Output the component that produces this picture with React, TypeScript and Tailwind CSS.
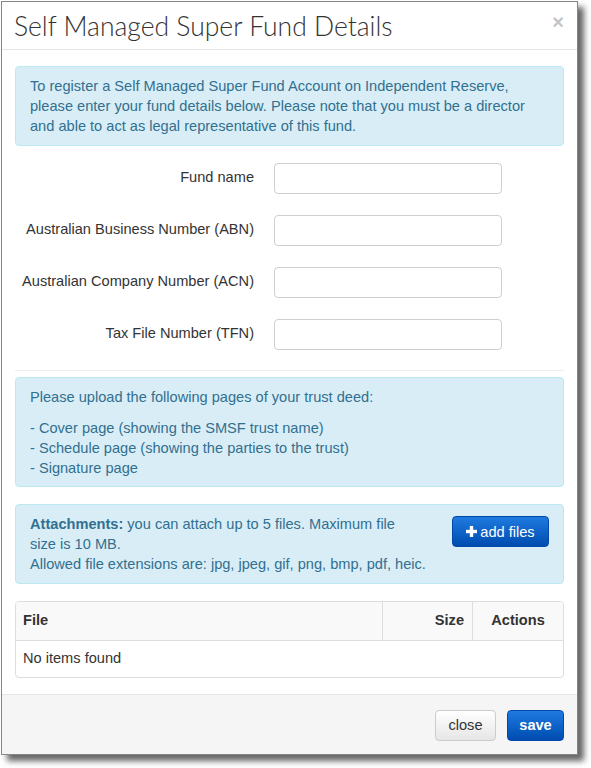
import React from "react";

const sans = { fontFamily: '"Liberation Sans", Arial, sans-serif' };

function Row({ label }: { label: string }) {
  return (
    <div className="flex items-center h-[30px] mb-[22px]">
      <label className="w-[239px] text-right text-[14.6px] text-[#333] whitespace-nowrap">{label}</label>
      <div className="ml-[20px] w-[228px] h-[31px] border border-[#cfcfcf] rounded-[4px] bg-white" />
    </div>
  );
}

export default function App() {
  return (
    <div className="bg-white w-[591px] h-[768px] pt-[1px] pl-[1px]" style={sans}>
      <div className="w-[577px] h-[754px] border border-[#858585] bg-white shadow-[6px_6px_6px_rgba(0,0,0,0.6)] flex flex-col">
        {/* header */}
        <div className="h-[48px] border-b border-[#e5e5e5] flex items-center justify-between pl-[12px] pr-[13px]">
          <h1
            className="text-[26.5px] text-[#333] leading-none mt-[1px] whitespace-nowrap"
            style={{ fontFamily: 'Lato, "Open Sans", sans-serif', fontWeight: 300 }}
          >
            Self Managed Super Fund Details
          </h1>
          <span className="text-[20px] font-bold text-[#c4c4c4] leading-none -mt-[7px]">×</span>
        </div>

        {/* body */}
        <div className="flex-1 px-[13px] pt-[16px]">
          <div className="border border-[#bce8f1] bg-[#d9edf7] text-[#31708f] rounded-[4px] px-[14px] py-[9px] text-[14.6px] leading-[20px]">
            <div className="whitespace-nowrap">To register a Self Managed Super Fund Account on Independent Reserve,</div>
            <div className="whitespace-nowrap">please enter your fund details below. Please note that you must be a director</div>
            <div className="whitespace-nowrap">and able to act as legal representative of this fund.</div>
          </div>

          <div className="mt-[17px]">
            <Row label="Fund name" />
            <Row label="Australian Business Number (ABN)" />
            <Row label="Australian Company Number (ACN)" />
            <Row label="Tax File Number (TFN)" />
          </div>

          <div className="border-t border-[#eeeeee] -mt-[1px] mb-[6px] h-0" />

          <div className="border border-[#bce8f1] bg-[#d9edf7] text-[#31708f] rounded-[4px] px-[14px] pt-[9px] pb-[8px] text-[14.6px] leading-[20px]">
            <p className="mb-[11px]">Please upload the following pages of your trust deed:</p>
            <div>- Cover page (showing the SMSF trust name)</div>
            <div>- Schedule page (showing the parties to the trust)</div>
            <div>- Signature page</div>
          </div>

          <div className="mt-[17px] border border-[#bce8f1] bg-[#d9edf7] text-[#31708f] rounded-[4px] pl-[14px] pr-[14px] py-[9px] text-[14.6px] leading-[20px] flex justify-between">
            <div className="whitespace-nowrap">
              <span className="font-bold">Attachments:</span> you can attach up to 5 files. Maximum file
              <br />
              size is 10 MB.
              <br />
              Allowed file extensions are: jpg, jpeg, gif, png, bmp, pdf, heic.
            </div>
            <div>
              <button className="mt-[2px] h-[31px] w-[97px] rounded-[4px] border border-[#0049a8] bg-gradient-to-b from-[#1f7ae0] to-[#004cb0] text-white text-[14.6px] flex items-center justify-center gap-[3px]">
                <svg width="11" height="11" viewBox="0 0 11 11">
                  <rect x="3.8" y="0" width="3.4" height="11" fill="white" />
                  <rect x="0" y="3.8" width="11" height="3.4" fill="white" />
                </svg>
                add files
              </button>
            </div>
          </div>

          <div className="mt-[17px] border border-[#dddddd] rounded-[4px] overflow-hidden text-[14.6px] text-[#333]">
            <div className="flex h-[39px] bg-[#f9f9f9] border-b border-[#dddddd] font-bold">
              <div className="w-[367px] pl-[7px] flex items-center border-r border-[#dddddd]">File</div>
              <div className="w-[90px] pr-[8px] flex items-center justify-end border-r border-[#dddddd]">Size</div>
              <div className="flex-1 flex items-center justify-center">Actions</div>
            </div>
            <div className="h-[36px] pl-[7px] flex items-center">No items found</div>
          </div>
        </div>

        {/* footer */}
        <div className="h-[60px] border-t border-[#e5e5e5] bg-[#f5f5f5] flex items-start justify-end gap-[11px] pt-[15px] pr-[13px]">
          <button className="h-[31px] w-[61px] rounded-[4px] border border-[#cccccc] bg-gradient-to-b from-white to-[#e6e6e6] text-[#333] text-[14.6px]">
            close
          </button>
          <button className="h-[31px] w-[57px] rounded-[4px] border border-[#0049a8] bg-gradient-to-b from-[#1f7ae0] to-[#004cb0] text-white text-[14.6px] font-bold">
            save
          </button>
        </div>
      </div>
    </div>
  );
}
